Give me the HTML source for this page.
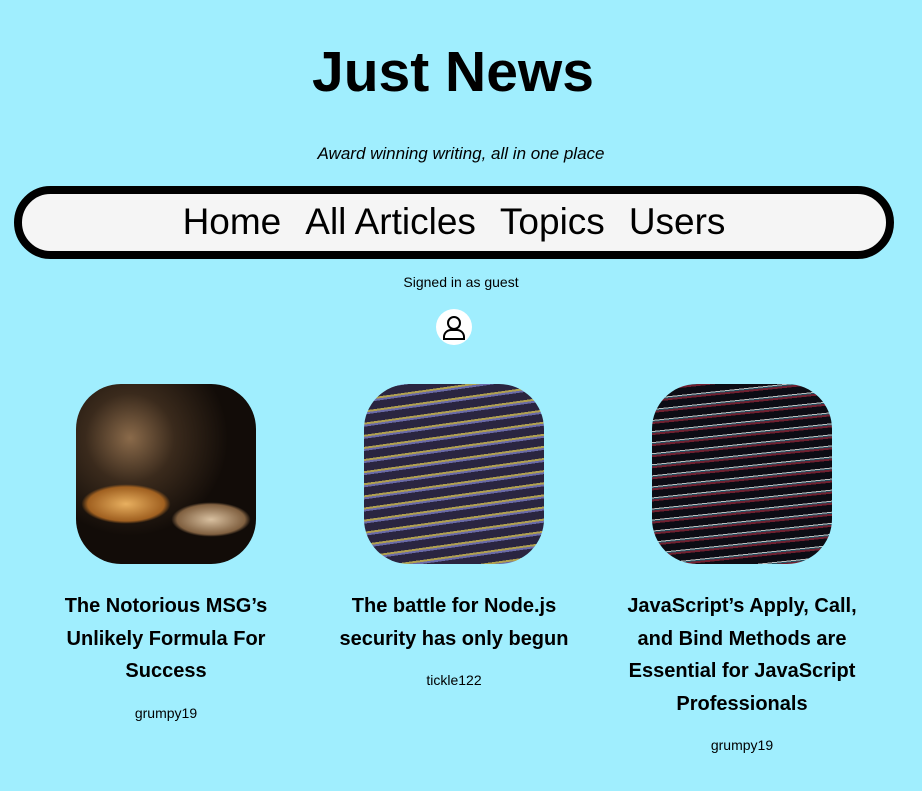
<!DOCTYPE html>
<html><head><meta charset="utf-8"><style>
*{margin:0;padding:0;box-sizing:border-box}
body{width:922px;height:791px;background:#a0eefe;font-family:"Liberation Sans","DejaVu Sans",sans-serif;color:#000;position:relative;overflow:hidden}
h1{position:absolute;top:40px;left:-8px;width:100%;text-align:center;font-size:57px;font-weight:bold;line-height:64px}
.sub{position:absolute;top:144px;width:100%;text-align:center;font-style:italic;font-size:17px}
nav{position:absolute;left:14px;top:186px;width:880px;height:73px;border:8px solid #000;border-radius:37px;background:#f5f5f5;text-align:center;font-size:37px;line-height:56px}
nav span{margin:0 12px}
.sig{position:absolute;top:274px;width:100%;text-align:center;font-size:14px}
.av{position:absolute;left:436px;top:309px;width:36px;height:36px;border-radius:50%;background:#fff}
.card{position:absolute;top:384px;width:288px;text-align:center}
.img{width:180px;height:180px;margin:0 auto;border-radius:45px;overflow:hidden}
.t{margin-top:26px;font-weight:bold;font-size:20px;line-height:32.5px;padding:0 10px}
.a{margin-top:17px;font-size:14px}
.i1{background:radial-gradient(circle at 30% 30%,#8a6a4a 0,#3a2a1c 25%,#120c08 55%),#111;position:relative}
.i1:before{content:"";position:absolute;left:5px;top:100px;width:90px;height:40px;border-radius:50%;background:radial-gradient(#e8b060,#a06020 60%,transparent 70%)}
.i1:after{content:"";position:absolute;left:95px;top:118px;width:80px;height:35px;border-radius:50%;background:radial-gradient(#d8c0a0,#806040 60%,transparent 70%)}
.i2{background:repeating-linear-gradient(-8deg,#2a2540 0 5px,#6a6aa8 5px 7px,#b0a050 7px 9px,#2a2540 9px 12px),#332c48}
.i3{background:repeating-linear-gradient(-6deg,#0c0c14 0 4px,#702030 4px 6px,#205060 6px 7px,#c0c0c0 7px 8px,#0c0c14 8px 11px),#111}
</style></head><body>
<h1>Just News</h1>
<div class="sub">Award winning writing, all in one place</div>
<nav><span>Home</span><span>All Articles</span><span>Topics</span><span>Users</span></nav>
<div class="sig">Signed in as guest</div>
<div class="av"><svg width="36" height="36" viewBox="0 0 36 36" fill="none" stroke="#000" stroke-width="2"><circle cx="18" cy="14" r="6"/><path d="M8 30v-2a7 7 0 0 1 7-7h6a7 7 0 0 1 7 7v2z"/></svg></div>
<div class="card" style="left:22px"><div class="img i1"></div><div class="t">The Notorious MSG’s Unlikely Formula For Success</div><div class="a">grumpy19</div></div>
<div class="card" style="left:310px"><div class="img i2"></div><div class="t">The battle for Node.js security has only begun</div><div class="a">tickle122</div></div>
<div class="card" style="left:598px"><div class="img i3"></div><div class="t">JavaScript’s Apply, Call, and Bind Methods are Essential for JavaScript Professionals</div><div class="a">grumpy19</div></div>
</body></html>
